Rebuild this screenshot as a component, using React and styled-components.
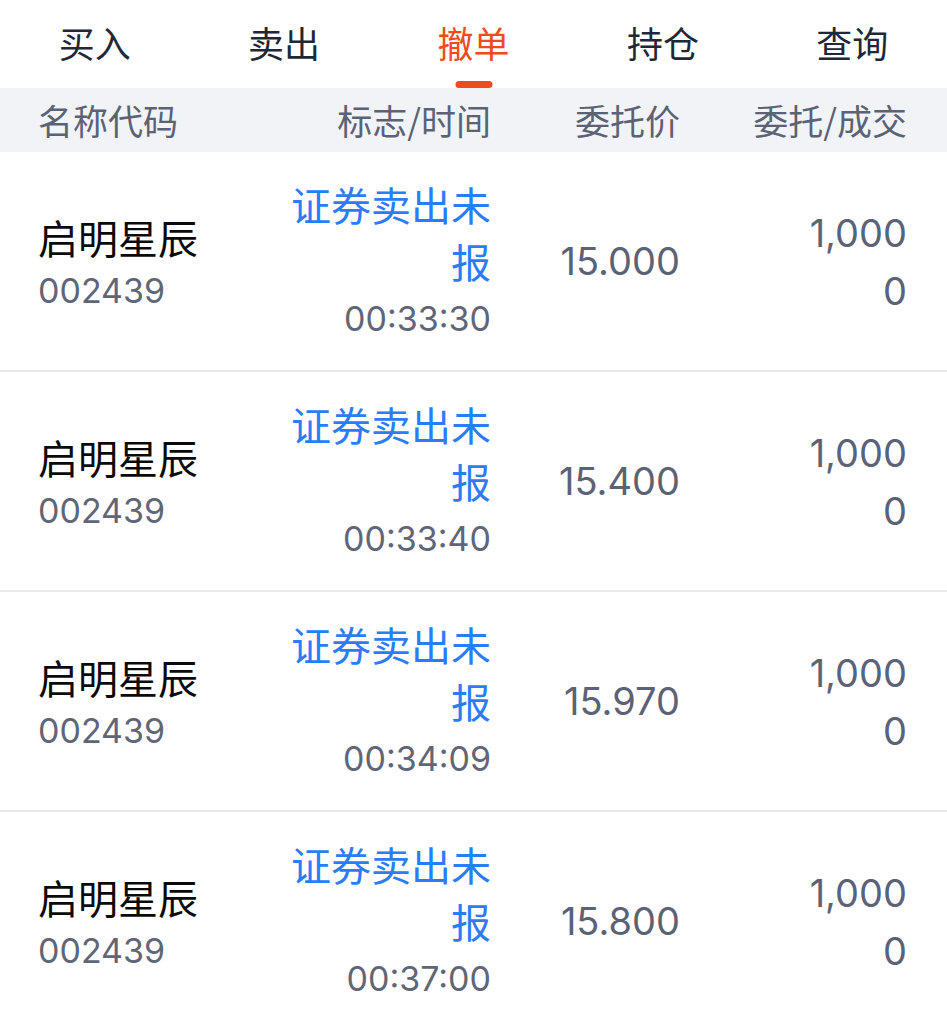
import React from "react";
import styled, { createGlobalStyle } from "styled-components";

const GlobalStyle = createGlobalStyle`
  html, body {
    margin: 0;
    padding: 0;
    background: #ffffff;
  }
  body {
    font-family: Inter, "Noto Sans CJK SC", sans-serif;
    -webkit-font-smoothing: antialiased;
  }
`;

const Page = styled.div`
  width: 947px;
  background: #ffffff;
`;

const TabBar = styled.div`
  display: flex;
  height: 88px;
  background: #ffffff;
`;

const Tab = styled.div`
  position: relative;
  flex: 1;
  display: flex;
  align-items: center;
  justify-content: center;
  padding-bottom: 4px;
  box-sizing: border-box;
  font-size: 36px;
  color: ${(p) => (p.$active ? "#ee4b22" : "#222736")};
  font-family: "Noto Sans CJK SC", sans-serif;
`;

const Indicator = styled.span`
  position: absolute;
  bottom: 0;
  left: 50%;
  transform: translateX(-50%);
  width: 37px;
  height: 7px;
  border-radius: 4px;
  background: #ee4b22;
`;

const grid = `
  display: grid;
  grid-template-columns: 200px 253px 189px 227px;
  padding: 0 40px 0 38px;
`;

const HeaderRow = styled.div`
  ${grid}
  height: 64px;
  align-items: center;
  background: #f2f3f7;
  font-family: "Noto Sans CJK SC", sans-serif;
  font-size: 35px;
  color: #5b6274;
`;

const HeadCell = styled.div`
  text-align: ${(p) => (p.$left ? "left" : "right")};
  line-height: 64px;
  white-space: nowrap;
`;

const Row = styled.div`
  ${grid}
  align-items: center;
  padding-top: 24px;
  padding-bottom: 23px;
  border-bottom: 2px solid #e7e9ed;
`;

const NameCell = styled.div`
  display: flex;
  flex-direction: column;
  padding-top: 4px;
`;

const Name = styled.div`
  font-family: "Noto Sans CJK SC", sans-serif;
  font-size: 40px;
  line-height: 54px;
  color: #0a0a0a;
  white-space: nowrap;
`;

const Code = styled.div`
  font-size: 34px;
  line-height: 54px;
  color: #5f6678;
`;

const StatusCell = styled.div`
  display: flex;
  flex-direction: column;
  align-items: flex-end;
  text-align: right;
`;

const Status = styled.div`
  font-family: "Noto Sans CJK SC", sans-serif;
  font-size: 40px;
  line-height: 57px;
  color: #2b7cf6;
  width: 205px;
  text-align: right;
`;

const Time = styled.div`
  font-size: 34px;
  line-height: 57px;
  color: #5f6678;
`;

const Price = styled.div`
  text-align: right;
  font-size: 38px;
  line-height: 57px;
  color: #5b6275;
`;

const QtyCell = styled.div`
  display: flex;
  flex-direction: column;
  align-items: flex-end;
`;

const Qty = styled.div`
  font-size: 38px;
  line-height: 58px;
  color: #5b6275;
`;

const tabs = ["买入", "卖出", "撤单", "持仓", "查询"];

const orders = [
  { price: "15.000", time: "00:33:30" },
  { price: "15.400", time: "00:33:40" },
  { price: "15.970", time: "00:34:09" },
  { price: "15.800", time: "00:37:00" },
];

export default function App() {
  return (
    <Page>
      <GlobalStyle />
      <TabBar>
        {tabs.map((t, i) => (
          <Tab key={t} $active={i === 2}>
            {t}
            {i === 2 && <Indicator />}
          </Tab>
        ))}
      </TabBar>
      <HeaderRow>
        <HeadCell $left>名称代码</HeadCell>
        <HeadCell>标志/时间</HeadCell>
        <HeadCell>委托价</HeadCell>
        <HeadCell>委托/成交</HeadCell>
      </HeaderRow>
      {orders.map((o) => (
        <Row key={o.time}>
          <NameCell>
            <Name>启明星辰</Name>
            <Code>002439</Code>
          </NameCell>
          <StatusCell>
            <Status>证券卖出未报</Status>
            <Time>{o.time}</Time>
          </StatusCell>
          <Price>{o.price}</Price>
          <QtyCell>
            <Qty>1,000</Qty>
            <Qty>0</Qty>
          </QtyCell>
        </Row>
      ))}
    </Page>
  );
}
